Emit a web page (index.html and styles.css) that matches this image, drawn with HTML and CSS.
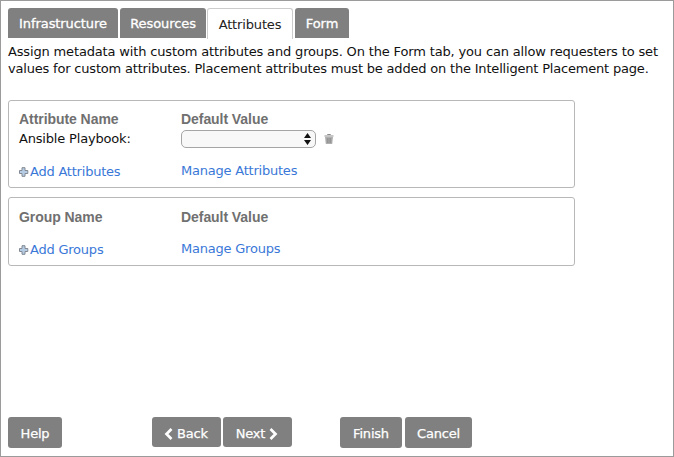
FILE: index.html
```html
<!DOCTYPE html>
<html lang="en">
<head>
<meta charset="utf-8">
<title>Attributes</title>
<link rel="stylesheet" href="styles.css">
</head>
<body>
<main class="dialog">
  <nav class="tabs">
    <a class="tab tab-infra"><span>Infrastructure</span></a>
    <a class="tab tab-res"><span>Resources</span></a>
    <a class="tab tab-attr active"><span>Attributes</span></a>
    <a class="tab tab-form"><span>Form</span></a>
  </nav>
  <p class="intro"><span class="line-one">Assign metadata with custom attributes and groups. On the Form tab, you can allow requesters to set</span><br><span class="line-two">values for custom attributes. Placement attributes must be added on the Intelligent Placement page.</span></p>
  <section class="panel attributes">
    <div class="row head"><b>Attribute Name</b><b>Default Value</b></div>
    <div class="row field">
      <label>Ansible Playbook:</label>
      <div class="control">
        <div class="select">
          <svg width="7" height="12" viewBox="0 0 7 12"><path d="M0 5 3.500 0 7 5ZM0 7h7l-3.500 5Z" fill="#111"/></svg>
        </div>
        <svg class="trash" width="10" height="10" viewBox="0 0 10 10"><path d="M3.500 1V.5h3V1M.5 2h9" fill="none" stroke="#8b8b8b"/><path d="M1 3h8l-.8 7H1.800Z" fill="#b0b0b0"/><path d="M3.300 4v5M5 4v5M6.700 4v5" stroke="#808080" stroke-width=".7"/></svg>
      </div>
    </div>
    <div class="row links">
      <a class="add"><svg class="plus" width="10" height="10" viewBox="0 0 10 10"><path d="M3 .7h3v2.800h2.800v3h-2.800v2.800h-3v-2.800h-2.500v-3h2.500Z" fill="#b5cce4" stroke="#828992" stroke-linejoin="round"/></svg><span>Add Attributes</span></a>
      <a class="manage">Manage Attributes</a>
    </div>
  </section>
  <section class="panel groups">
    <div class="row head"><b>Group Name</b><b>Default Value</b></div>
    <div class="row links">
      <a class="add"><svg class="plus" width="10" height="10" viewBox="0 0 10 10"><path d="M3 .7h3v2.800h2.800v3h-2.800v2.800h-3v-2.800h-2.500v-3h2.500Z" fill="#b5cce4" stroke="#828992" stroke-linejoin="round"/></svg><span>Add Groups</span></a>
      <a class="manage">Manage Groups</a>
    </div>
  </section>
  <footer class="actions">
    <button class="help">Help</button>
    <button class="back"><svg width="9" height="12" viewBox="0 0 9 12"><path d="M7.500 1 2.500 6l5 5" fill="none" stroke="#fff" stroke-width="2.700"/></svg><span>Back</span></button>
    <button class="next"><span>Next</span><svg width="9" height="12" viewBox="0 0 9 12"><path d="m1.500 1 5 5-5 5" fill="none" stroke="#fff" stroke-width="2.700"/></svg></button>
    <button class="finish">Finish</button>
    <button class="cancel">Cancel</button>
  </footer>
</main>
</body>
</html>
```
FILE: styles.css
```css
* { box-sizing: border-box; }
body { margin: 0; background: #fff; color: #111; font: 13px/16px "DejaVu Sans", sans-serif; }
svg { display: block; flex: none; }
.dialog { width: 674px; height: 457px; border: 1px solid #9b9b9b; padding: 7px; display: flex; flex-direction: column; }
.tabs { display: flex; gap: 2px; height: 31px; }
.tab { height: 30px; border-radius: 3px 3px 0 0; background: #808080; color: #fff; text-align: center; line-height: 31px; white-space: nowrap; letter-spacing: -.08px; -webkit-text-stroke: .3px #fff; }
.tab-infra { width: 110px; }
.tab-res { width: 86px; }
.tab-attr { width: 86px; margin-left: -1px; }
.tab-form { width: 54px; }
.tab.active { height: 31px; background: #fff; color: #222; border: 1px solid #ccc; border-bottom: 0; letter-spacing: -.15px; -webkit-text-stroke: 0; }
.intro { margin: 5px 0 0; height: 56px; white-space: nowrap; line-height: 16.500px; }
.line-one { letter-spacing: -.155px; }
.line-two { letter-spacing: -.19px; }
.panel { width: 567px; border: 1px solid #b8b8b8; border-radius: 3px; padding: 10px; flex: none; }
.attributes { height: 88px; }
.groups { height: 69px; margin-top: 9px; padding-top: 11px; }
.row { display: grid; grid-template-columns: 162px 1fr; }
.head { font: bold 14px/17px "Liberation Sans", sans-serif; letter-spacing: -.06px; color: #707070; }
.field { height: 21px; line-height: 21px; letter-spacing: -.18px; }
.control { display: flex; align-items: center; gap: 8px; }
.select { width: 135px; height: 18px; border: 1px solid #a5a5a5; border-radius: 5px; background: #f8f8f8; display: flex; align-items: center; justify-content: flex-end; padding-right: 4px; }
.links { margin-top: 14px; color: #3a78d8; line-height: 16px; letter-spacing: -.22px; }
.groups .links { margin-top: 15px; }
.add { display: flex; align-items: center; gap: 1px; padding-top: 1px; }
.actions { margin-top: auto; margin-bottom: 1px; height: 31px; display: flex; align-items: flex-start; }
button { border: 0; border-radius: 3px; padding: 0; height: 31px; background: #808080; color: #fff; font: inherit; display: flex; align-items: center; justify-content: center; gap: 4px; padding-top: 2px; letter-spacing: -.2px; -webkit-text-stroke: .25px #fff; }
.help { width: 54px; margin-right: 90px; }
.back { width: 69px; height: 30px; margin-right: 2px; }
.next { width: 69px; height: 30px; margin-right: 48px; }
.back, .next { padding-top: 3px; padding-right: 1px; }
.finish { width: 62px; margin-right: 3px; }
.cancel { width: 67px; }
```
